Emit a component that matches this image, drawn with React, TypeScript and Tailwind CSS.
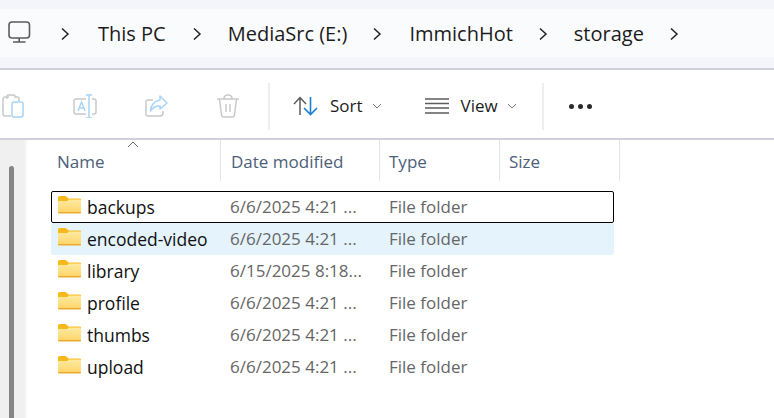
import React from "react";

const font = { fontFamily: '"Open Sans", "Noto Sans", sans-serif' };

function Chevron() {
  return (
    <svg width="10" height="14" viewBox="0 0 10 14" className="shrink-0">
      <path d="M2 1.5 L8 7 L2 12.5" fill="none" stroke="#222" strokeWidth="1.5" />
    </svg>
  );
}

function Caret() {
  return (
    <svg width="10" height="6" viewBox="0 0 10 6" className="shrink-0">
      <path d="M1 1 L5 5 L9 1" fill="none" stroke="#777" strokeWidth="1" />
    </svg>
  );
}

function Folder() {
  return (
    <svg width="23" height="18" viewBox="0 0 23 18" className="shrink-0">
      <defs>
        <linearGradient id="fg" x1="0" y1="0" x2="0" y2="1">
          <stop offset="0" stopColor="#feeaa0" />
          <stop offset="1" stopColor="#fdd56a" />
        </linearGradient>
      </defs>
      <path d="M0 2 Q0 0 2 0 H7 Q8 0 9 1 L10.5 2.5 H22 Q23 2.5 23 3.5 V6 H0 Z" fill="#f8b81c" />
      <path d="M0 5 L9 5 L11 3.4 H22 Q23 3.4 23 4.4 V16 Q23 17 22 17 H1 Q0 17 0 16 Z" fill="url(#fg)" />
      <path d="M0 16 H23 V16.2 Q23 17.4 22 17.4 H1 Q0 17.4 0 16.2 Z" fill="#eeaa2c" />
    </svg>
  );
}

const rows = [
  { name: "backups", date: "6/6/2025 4:21 ...", state: "focus" },
  { name: "encoded-video", date: "6/6/2025 4:21 ...", state: "hover" },
  { name: "library", date: "6/15/2025 8:18...", state: "" },
  { name: "profile", date: "6/6/2025 4:21 ...", state: "" },
  { name: "thumbs", date: "6/6/2025 4:21 ...", state: "" },
  { name: "upload", date: "6/6/2025 4:21 ...", state: "" },
];

export default function App() {
  return (
    <div className="w-[774px] h-[418px] overflow-hidden flex flex-col bg-white" style={font}>
      {/* address area */}
      <div className="h-[70px] shrink-0 bg-[#f3f5fa] border-b-2 border-[#d0d0da] pt-[9px]">
        <div className="h-[48px] bg-[#fafbfd] flex items-center text-[20px] text-[#1c1c1c] pl-[8px] pt-[1px]">
          <svg width="24" height="24" viewBox="0 0 24 24" className="shrink-0 mb-[2px]">
            <rect x="1" y="1" width="20.5" height="16" rx="3" fill="none" stroke="#5c5c5c" strokeWidth="1.6" />
            <path d="M11.2 17 V20.5 M5 21 H17.5" stroke="#5c5c5c" strokeWidth="1.6" fill="none" />
          </svg>
          <div className="ml-[28px]"><Chevron /></div>
          <span className="ml-[28px]">This PC</span>
          <div className="ml-[26px]"><Chevron /></div>
          <span className="ml-[26px]">MediaSrc (E:)</span>
          <div className="ml-[25px]"><Chevron /></div>
          <span className="ml-[27px]">ImmichHot</span>
          <div className="ml-[25px]"><Chevron /></div>
          <span className="ml-[26px]">storage</span>
          <div className="ml-[25px]"><Chevron /></div>
        </div>
      </div>

      {/* command bar */}
      <div className="h-[70px] shrink-0 border-b-2 border-[#d0d0da] flex items-center text-[17px] text-[#1c1c1c] pl-[2px] pt-[4px]">
        <svg width="22" height="24" viewBox="0 0 22 24" className="shrink-0">
          <path d="M7 3 H3 Q1 3 1 5 V20 Q1 22 3 22 H9" fill="none" stroke="#c9c9c9" strokeWidth="1.5" />
          <path d="M5 5 V2.5 Q5 1 7 1 H11 Q13 1 13 2.5 V3 H15 Q17 3 17 5 V7" fill="none" stroke="#c9c9c9" strokeWidth="1.5" />
          <rect x="10" y="8" width="11" height="15" rx="2" fill="none" stroke="#a8d4f7" strokeWidth="1.5" />
        </svg>
        <svg width="24" height="24" viewBox="0 0 24 24" className="shrink-0 ml-[49px]">
          <path d="M13 5 H3 Q1 5 1 7 V18 Q1 20 3 20 H13 M19 5 H21 Q23 5 23 7 V18 Q23 20 21 20 H19" fill="none" stroke="#c9c9c9" strokeWidth="1.5" />
          <path d="M13 1 H19 M16 1 V24 M13 24 H19" fill="none" stroke="#a8d4f7" strokeWidth="1.5" />
          <path d="M5 17 L8.5 8 L12 17 M6.2 14 H10.8" fill="none" stroke="#a8d4f7" strokeWidth="1.5" />
        </svg>
        <svg width="23" height="23" viewBox="0 0 23 23" className="shrink-0 ml-[48px]">
          <path d="M8 5 H3 Q1 5 1 7 V19 Q1 21 3 21 H15 Q18 21 18 18 V16" fill="none" stroke="#c9c9c9" strokeWidth="1.5" />
          <path d="M15 1 L22 8 L15 14 V11 Q9 10.5 5.5 16 Q6 7 15 5 Z" fill="none" stroke="#a8d4f7" strokeWidth="1.5" strokeLinejoin="round" />
        </svg>
        <svg width="22" height="24" viewBox="0 0 22 24" className="shrink-0 ml-[49px]">
          <path d="M0 5 H22 M7 5 Q7 1 11 1 Q15 1 15 5 M2.5 5 L4.5 21 Q4.7 23 7 23 H15 Q17.3 23 17.5 21 L19.5 5 M9 10 V18 M13 10 V18" fill="none" stroke="#c9c9c9" strokeWidth="1.5" />
        </svg>
        <div className="w-[2px] h-[47px] bg-[#eeeeee] ml-[29px]" />
        <svg width="25" height="20" viewBox="0 0 25 20" className="shrink-0 ml-[23px]">
          <path d="M7 19 V1 M1 8 L7 1.5 L13 8" fill="none" stroke="#5c5c5c" strokeWidth="1.5" />
          <path d="M17.5 1 V19 M11 12 L17.5 18.5 L24 12" fill="none" stroke="#1a7fd4" strokeWidth="1.6" />
        </svg>
        <span className="ml-[12px]">Sort</span>
        <div className="ml-[9px]"><Caret /></div>
        <svg width="24" height="16" viewBox="0 0 24 16" className="shrink-0 ml-[43px]">
          <path d="M0 1 H24 M0 5.5 H24 M0 10 H24 M0 15 H24" stroke="#5c5c5c" strokeWidth="1.3" fill="none" />
        </svg>
        <span className="ml-[12px]">View</span>
        <div className="ml-[9px]"><Caret /></div>
        <div className="w-[2px] h-[47px] bg-[#eeeeee] ml-[25px]" />
        <div className="flex gap-[4px] ml-[25px]">
          <div className="w-[5px] h-[5px] rounded-full bg-[#2a2a2a]" />
          <div className="w-[5px] h-[5px] rounded-full bg-[#2a2a2a]" />
          <div className="w-[5px] h-[5px] rounded-full bg-[#2a2a2a]" />
        </div>
      </div>

      {/* main */}
      <div className="flex-1 flex min-h-0">
        <div className="w-[25px] shrink-0 bg-[#f0f0f0] border-r-[2px] border-[#f7f7f7] box-content pt-[26px] pl-0">
          <div className="w-[5px] h-full ml-[9px] rounded-t-full bg-[#858585]" />
        </div>
        <div className="flex-1 min-w-0 pl-[24px]">
          {/* headers */}
          <div className="h-[41px] flex text-[17px] text-[#4c607a] relative">
            <svg width="12" height="7" viewBox="0 0 12 7" className="absolute left-[76px] top-[1px]">
              <path d="M1 6 L6 1 L11 6" fill="none" stroke="#666" strokeWidth="1" />
            </svg>
            <div className="w-[170px] pl-[6px] pt-[9px] border-r border-[#e5e5e5]">Name</div>
            <div className="w-[159px] pl-[10px] pt-[9px] border-r border-[#e5e5e5]">Date modified</div>
            <div className="w-[120px] pl-[9px] pt-[9px] border-r border-[#e5e5e5]">Type</div>
            <div className="w-[120px] pl-[9px] pt-[9px] border-r border-[#e5e5e5]">Size</div>
          </div>
          {/* rows */}
          <div className="mt-[10px] w-[563px] text-[17px]">
            {rows.map((r) => (
              <div
                key={r.name}
                className={
                  "h-[32px] flex items-center rounded-[2px] " +
                  (r.state === "focus"
                    ? "border border-black"
                    : r.state === "hover"
                      ? "bg-[#e5f3fd] border border-transparent"
                      : "border border-transparent")
                }
              >
                <div className="ml-[6px] mb-[4px]"><Folder /></div>
                <div className="ml-[6px] w-[143px] text-[17.5px] text-[#111111] whitespace-nowrap">{r.name}</div>
                <div className="w-[159px] text-[#666666] whitespace-nowrap">{r.date}</div>
                <div className="text-[#666666] whitespace-nowrap">File folder</div>
              </div>
            ))}
          </div>
        </div>
      </div>
    </div>
  );
}
